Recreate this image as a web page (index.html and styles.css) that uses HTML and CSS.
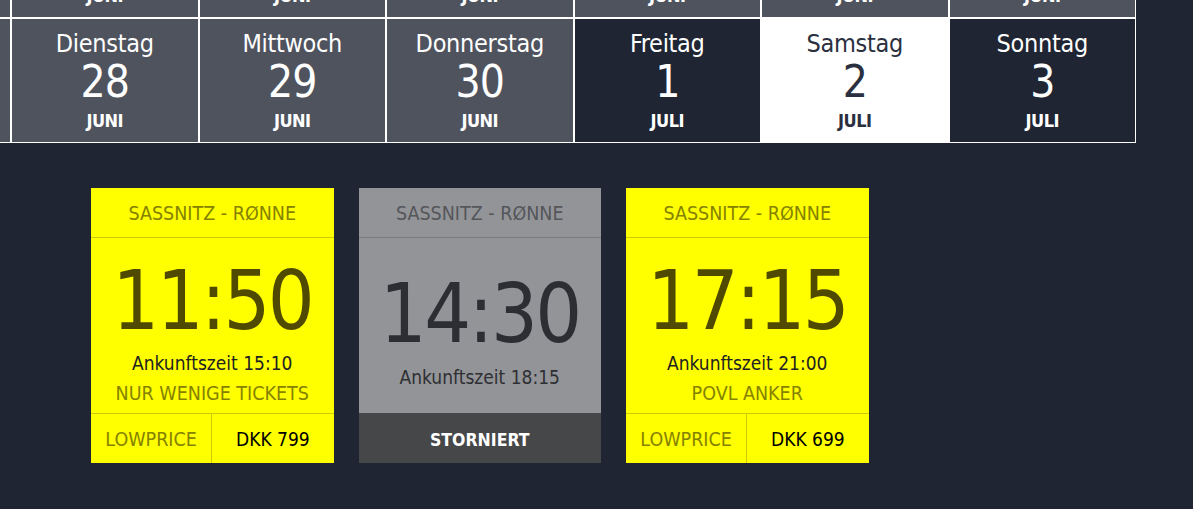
FILE: index.html
```html
<!DOCTYPE html>
<html lang="de">
<head>
<meta charset="utf-8">
<title>Fahrplan</title>
<link rel="stylesheet" href="styles.css">
</head>
<body>
<div class="calendar">
  <div class="week">
    <div class="day day--past"></div>
    <div class="day day--past"><span class="day__name">Dienstag</span><span class="day__num">21</span><span class="day__month">JUNI</span></div>
    <div class="day day--past"><span class="day__name">Mittwoch</span><span class="day__num">22</span><span class="day__month">JUNI</span></div>
    <div class="day day--past"><span class="day__name">Donnerstag</span><span class="day__num">23</span><span class="day__month">JUNI</span></div>
    <div class="day day--past"><span class="day__name">Freitag</span><span class="day__num">24</span><span class="day__month">JUNI</span></div>
    <div class="day day--past"><span class="day__name">Samstag</span><span class="day__num">25</span><span class="day__month">JUNI</span></div>
    <div class="day day--past"><span class="day__name">Sonntag</span><span class="day__num">26</span><span class="day__month">JUNI</span></div>

    <div class="day day--past"></div>
    <div class="day day--past"><span class="day__name">Dienstag</span><span class="day__num">28</span><span class="day__month">JUNI</span></div>
    <div class="day day--past"><span class="day__name">Mittwoch</span><span class="day__num">29</span><span class="day__month">JUNI</span></div>
    <div class="day day--past"><span class="day__name">Donnerstag</span><span class="day__num">30</span><span class="day__month">JUNI</span></div>
    <div class="day"><span class="day__name">Freitag</span><span class="day__num">1</span><span class="day__month">JULI</span></div>
    <div class="day day--selected"><span class="day__name">Samstag</span><span class="day__num">2</span><span class="day__month">JULI</span></div>
    <div class="day"><span class="day__name">Sonntag</span><span class="day__num">3</span><span class="day__month">JULI</span></div>
  </div>
</div>

<section class="trips">
  <article class="trip">
    <header class="trip__route">SASSNITZ - RØNNE</header>
    <div class="trip__body">
      <div class="trip__time">11:50</div>
      <div class="trip__arrival">Ankunftszeit 15:10</div>
      <div class="trip__status">NUR WENIGE TICKETS</div>
    </div>
    <footer class="trip__foot">
      <span class="trip__fare">LOWPRICE</span>
      <span class="trip__price">DKK 799</span>
    </footer>
  </article>

  <article class="trip trip--cancelled">
    <header class="trip__route">SASSNITZ - RØNNE</header>
    <div class="trip__body">
      <div class="trip__time">14:30</div>
      <div class="trip__arrival">Ankunftszeit 18:15</div>
    </div>
    <footer class="trip__foot trip__foot--single">
      <span class="trip__cancel">STORNIERT</span>
    </footer>
  </article>

  <article class="trip">
    <header class="trip__route">SASSNITZ - RØNNE</header>
    <div class="trip__body">
      <div class="trip__time">17:15</div>
      <div class="trip__arrival">Ankunftszeit 21:00</div>
      <div class="trip__status">POVL ANKER</div>
    </div>
    <footer class="trip__foot">
      <span class="trip__fare">LOWPRICE</span>
      <span class="trip__price">DKK 699</span>
    </footer>
  </article>
</section>
</body>
</html>
```

FILE: styles.css
```css
* {
  box-sizing: border-box;
}

html, body {
  margin: 0;
  padding: 0;
}

body {
  background: #1f2533;
  width: 1193px;
  height: 509px;
  overflow: hidden;
  font-family: "DejaVu Sans Condensed", "DejaVu Sans", sans-serif;
  font-stretch: condensed;
  color: #ffffff;
}

/* ---------- calendar ---------- */
.calendar {
  overflow: hidden;
  height: 143px;
}

.week {
  display: grid;
  grid-template-columns: repeat(7, 187.5px);
  grid-auto-rows: 125px;
  margin: -107px 0 0 -176.5px;
}

.day {
  border: 1px solid #ffffff;
  background: #1f2533;
  color: #ffffff;
  display: flex;
  flex-direction: column;
  align-items: center;
  padding-top: 12px;
}

.day--past {
  background: #4f535e;
}

.day--selected {
  background: #ffffff;
  color: #2b3040;
}

.day__name {
  font-size: 25px;
  line-height: 25px;
  letter-spacing: -0.3px;
}

.day__num {
  margin-top: 4px;
  font-size: 44px;
  line-height: 44px;
  letter-spacing: -1px;
}

.day__month {
  margin-top: 8px;
  font-size: 18px;
  line-height: 18px;
  font-weight: bold;
  letter-spacing: -0.5px;
}

/* ---------- trips ---------- */
.trips {
  display: flex;
  gap: 25px;
  padding: 45px 0 0 91px;
}

.trip {
  width: 242.5px;
  height: 275px;
  background: #ffff00;
  display: flex;
  flex-direction: column;
  text-align: center;
}

.trip__route {
  height: 50px;
  border-bottom: 1px solid #cccc00;
  padding-top: 3px;
  font-size: 19.5px;
  line-height: 46px;
  color: #858200;
}

.trip__body {
  height: 175px;
  display: flex;
  flex-direction: column;
  justify-content: center;
  padding-top: 9px;
}

.trip__time {
  font-size: 82px;
  line-height: 82px;
  letter-spacing: -2.5px;
  color: #4f4a00;
}

.trip__arrival {
  margin-top: 12.5px;
  font-size: 19px;
  line-height: 19px;
  color: #222222;
}

.trip__status {
  margin-top: 11px;
  margin-bottom: -3px;
  font-size: 19.5px;
  line-height: 19.5px;
  color: #858200;
}

.trip__foot {
  height: 50px;
  border-top: 1px solid #cccc00;
  display: grid;
  grid-template-columns: 1fr 1fr;
  padding-top: 2px;
  font-size: 19.5px;
  line-height: 47px;
}

.trip__fare {
  border-right: 1px solid #cccc00;
  margin-top: -2px;
  padding-top: 2px;
  color: #858200;
}

.trip__price {
  color: #000000;
  font-size: 19px;
}

/* cancelled */
.trip--cancelled {
  background: #939498;
}

.trip--cancelled .trip__route {
  border-bottom-color: #7a7b7f;
  color: #55565a;
}

.trip--cancelled .trip__time {
  color: #2d2e33;
}

.trip--cancelled .trip__arrival {
  color: #2e2f33;
}

.trip__foot--single {
  display: block;
  background: #464749;
  border-top: 1px solid #464749;
}

.trip__cancel {
  color: #ffffff;
  font-weight: bold;
  font-size: 17.5px;
}
```
